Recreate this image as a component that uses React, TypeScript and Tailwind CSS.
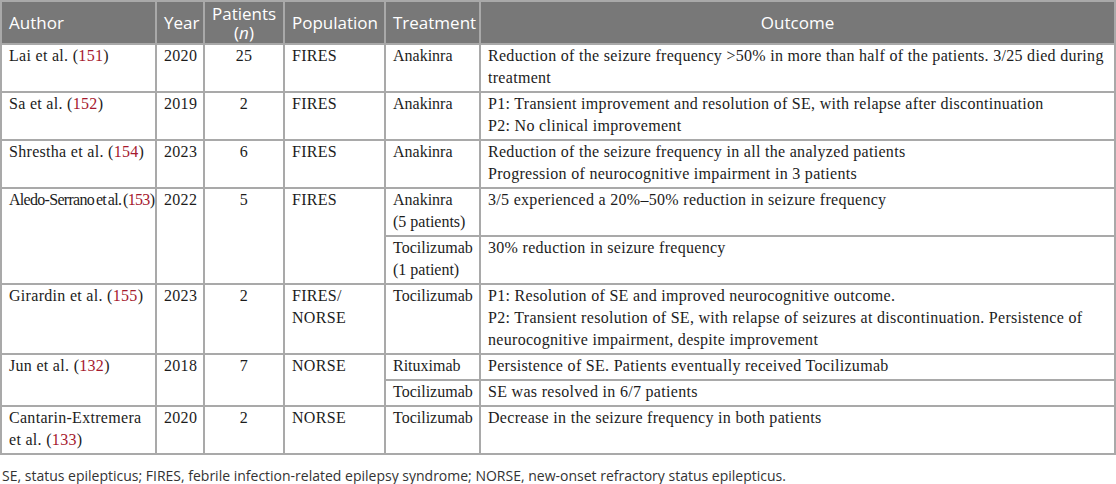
import React from "react";

type Sub = { treatment: React.ReactNode; outcome: React.ReactNode };

interface Row {
    author: React.ReactNode;
    ref: string;
    year: string;
    n: string;
    population: React.ReactNode;
    subs: Sub[];
    tight?: boolean;
}

const rows: Row[] = [
    {
        author: "Lai et al.",
        ref: "151",
        year: "2020",
        n: "25",
        population: "FIRES",
        subs: [
            {
                treatment: "Anakinra",
                outcome: (
                    <>
                        Reduction of the seizure frequency &gt;50% in more than half of the patients. 3/25 died during
                        <br />
                        treatment
                    </>
                ),
            },
        ],
    },
    {
        author: "Sa et al.",
        ref: "152",
        year: "2019",
        n: "2",
        population: "FIRES",
        subs: [
            {
                treatment: "Anakinra",
                outcome: (
                    <>
                        P1: Transient improvement and resolution of SE, with relapse after discontinuation
                        <br />
                        P2: No clinical improvement
                    </>
                ),
            },
        ],
    },
    {
        author: "Shrestha et al.",
        ref: "154",
        year: "2023",
        n: "6",
        population: "FIRES",
        subs: [
            {
                treatment: "Anakinra",
                outcome: (
                    <>
                        Reduction of the seizure frequency in all the analyzed patients
                        <br />
                        Progression of neurocognitive impairment in 3 patients
                    </>
                ),
            },
        ],
    },
    {
        author: "Aledo-Serrano et al.",
        ref: "153",
        year: "2022",
        n: "5",
        population: "FIRES",
        tight: true,
        subs: [
            {
                treatment: (
                    <>
                        Anakinra
                        <br />
                        (5 patients)
                    </>
                ),
                outcome: "3/5 experienced a 20%–50% reduction in seizure frequency",
            },
            {
                treatment: (
                    <>
                        Tocilizumab
                        <br />
                        (1 patient)
                    </>
                ),
                outcome: "30% reduction in seizure frequency",
            },
        ],
    },
    {
        author: "Girardin et al.",
        ref: "155",
        year: "2023",
        n: "2",
        population: (
            <>
                FIRES/
                <br />
                NORSE
            </>
        ),
        subs: [
            {
                treatment: "Tocilizumab",
                outcome: (
                    <>
                        P1: Resolution of SE and improved neurocognitive outcome.
                        <br />
                        P2: Transient resolution of SE, with relapse of seizures at discontinuation. Persistence of
                        <br />
                        neurocognitive impairment, despite improvement
                    </>
                ),
            },
        ],
    },
    {
        author: "Jun et al.",
        ref: "132",
        year: "2018",
        n: "7",
        population: "NORSE",
        subs: [
            { treatment: "Rituximab", outcome: "Persistence of SE. Patients eventually received Tocilizumab" },
            { treatment: "Tocilizumab", outcome: "SE was resolved in 6/7 patients" },
        ],
    },
    {
        author: (
            <>
                Cantarin-Extremera
                <br />
                et al.
            </>
        ),
        ref: "133",
        year: "2020",
        n: "2",
        population: "NORSE",
        subs: [{ treatment: "Tocilizumab", outcome: "Decrease in the seizure frequency in both patients" }],
    },
];

const th = "border-2 border-[#a9a9a9] px-[7px] align-middle font-normal";
const td = "border-2 border-[#a9a9a9] px-[7px] pt-0 pb-[2px] align-top whitespace-nowrap";

export default function App() {
    return (
        <div className="w-[1116px] h-[484px] bg-white overflow-hidden">
            <table className="w-[1116px] table-fixed border-collapse font-['Liberation_Serif',serif] text-[16px] leading-[22px] tracking-[0.3px] text-[#1c1c1c]">
                <colgroup>
                    <col className="w-[155px]" />
                    <col className="w-[48px]" />
                    <col className="w-[80px]" />
                    <col className="w-[101px]" />
                    <col className="w-[95px]" />
                    <col />
                </colgroup>
                <thead>
                    <tr className="h-[43px] bg-[#787878] text-white font-['Open_Sans',sans-serif] text-[17px] leading-[19px] tracking-normal">
                        <th className={`${th} text-left`}>Author</th>
                        <th className={`${th} text-left px-[4px]`}>Year</th>
                        <th className={`${th} text-center`}>
                            Patients
                            <br />(<i>n</i>)
                        </th>
                        <th className={`${th} text-left`}>Population</th>
                        <th className={`${th} text-left`}>Treatment</th>
                        <th className={`${th} text-center`}>Outcome</th>
                    </tr>
                </thead>
                <tbody>
                    {rows.map((r, i) =>
                        r.subs.map((s, j) => (
                            <tr key={`${i}-${j}`}>
                                {j === 0 && (
                                    <>
                                        <td
                                            rowSpan={r.subs.length}
                                            className={`${td} ${r.tight ? "tracking-[-0.7px] [word-spacing:-1.5px]" : ""}`}
                                        >
                                            {r.author} (<span className="text-[#a6192e]">{r.ref}</span>)
                                        </td>
                                        <td rowSpan={r.subs.length} className={`${td} text-center`}>
                                            {r.year}
                                        </td>
                                        <td rowSpan={r.subs.length} className={`${td} text-center`}>
                                            {r.n}
                                        </td>
                                        <td rowSpan={r.subs.length} className={td}>
                                            {r.population}
                                        </td>
                                    </>
                                )}
                                <td className={`${td} tracking-normal`}>{s.treatment}</td>
                                <td className={td}>{s.outcome}</td>
                            </tr>
                        ))
                    )}
                </tbody>
            </table>
            <p className="mt-[10px] pl-[2px] font-['Open_Sans',sans-serif] text-[14px] text-[#333]">
                SE, status epilepticus; FIRES, febrile infection-related epilepsy syndrome; NORSE, new-onset refractory status epilepticus.
            </p>
        </div>
    );
}
